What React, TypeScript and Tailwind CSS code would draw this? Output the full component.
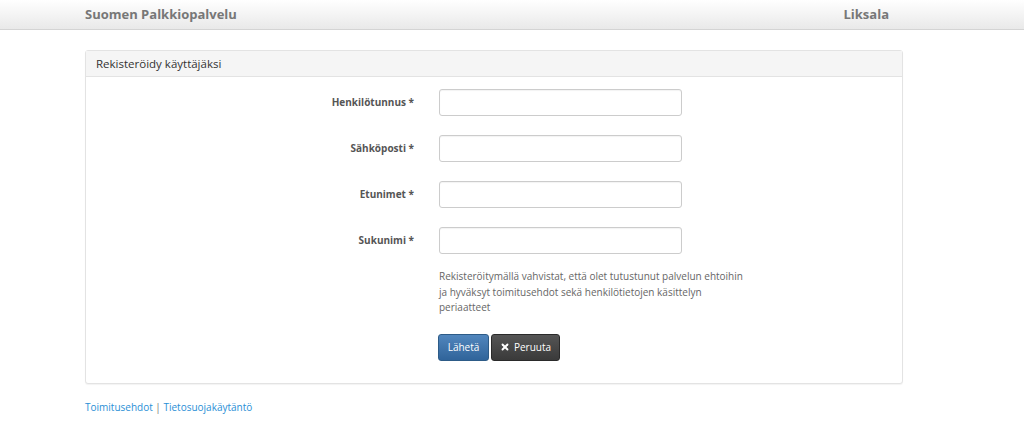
import { X } from 'lucide-react'

const FIELDS = ['Henkilötunnus *', 'Sähköposti *', 'Etunimet *', 'Sukunimi *']

export default function App() {
  return (
    <div className="min-h-[434px] bg-white font-['Open_Sans',sans-serif] text-[#333]">
      <header className="h-[30px] border-b border-[#d4d4d4] bg-gradient-to-b from-white to-[#e9e9e9]">
        <div className="ml-[85px] flex h-[29px] w-[818px] items-center justify-between pr-[14px]">
          <span className="text-[13px] font-bold text-[#777]">Suomen Palkkiopalvelu</span>
          <span className="text-[13px] font-bold text-[#777]">Liksala</span>
        </div>
      </header>

      <main className="ml-[85px] w-[818px] pt-[20px]">
        <section className="rounded-[3px] border border-[#e3e3e3] bg-white shadow-[0_1px_1px_rgba(0,0,0,0.05)]">
          <div className="flex h-[26px] items-center border-b border-[#e3e3e3] bg-[#f5f5f5] px-[10px] text-[11.5px] text-[#333]">
            Rekisteröidy käyttäjäksi
          </div>
          <div className="pb-[22px] pt-[12px]">
            <div className="flex flex-col gap-[19px]">
              {FIELDS.map((f) => (
                <div key={f} className="flex items-center">
                  <label className="w-[328px] text-right text-[10px] font-bold text-[#555]">{f}</label>
                  <input
                    type="text"
                    className="ml-[25px] h-[27px] w-[243px] rounded-[3px] border border-[#ccc] bg-white shadow-[inset_0_1px_1px_rgba(0,0,0,0.05)] outline-none"
                  />
                </div>
              ))}
            </div>
            <p className="ml-[353px] mt-[15px] w-[312px] text-[10px] leading-[15.5px] text-[#666]">
              Rekisteröitymällä vahvistat, että olet tutustunut palvelun ehtoihin ja hyväksyt toimitusehdot sekä henkilötietojen käsittelyn periaatteet
            </p>
            <div className="ml-[352px] mt-[18px] flex gap-[2px]">
              <button className="h-[27px] w-[51px] rounded-[3px] border border-[#2d5b87] bg-gradient-to-b from-[#5186bd] to-[#30649a] text-[10px] text-white">
                Lähetä
              </button>
              <button className="flex h-[27px] w-[69px] items-center justify-center gap-[4px] rounded-[3px] border border-[#2a2a2a] bg-gradient-to-b from-[#555] to-[#3a3a3a] text-[10px] text-white">
                <X size={10} strokeWidth={4.5} />
                Peruuta
              </button>
            </div>
          </div>
        </section>

        <footer className="mt-[16px] text-[10px] text-[#2a8fd6]">
          <a href="#">Toimitusehdot</a>
          <span className="text-[#777]"> | </span>
          <a href="#">Tietosuojakäytäntö</a>
        </footer>
      </main>
    </div>
  )
}
